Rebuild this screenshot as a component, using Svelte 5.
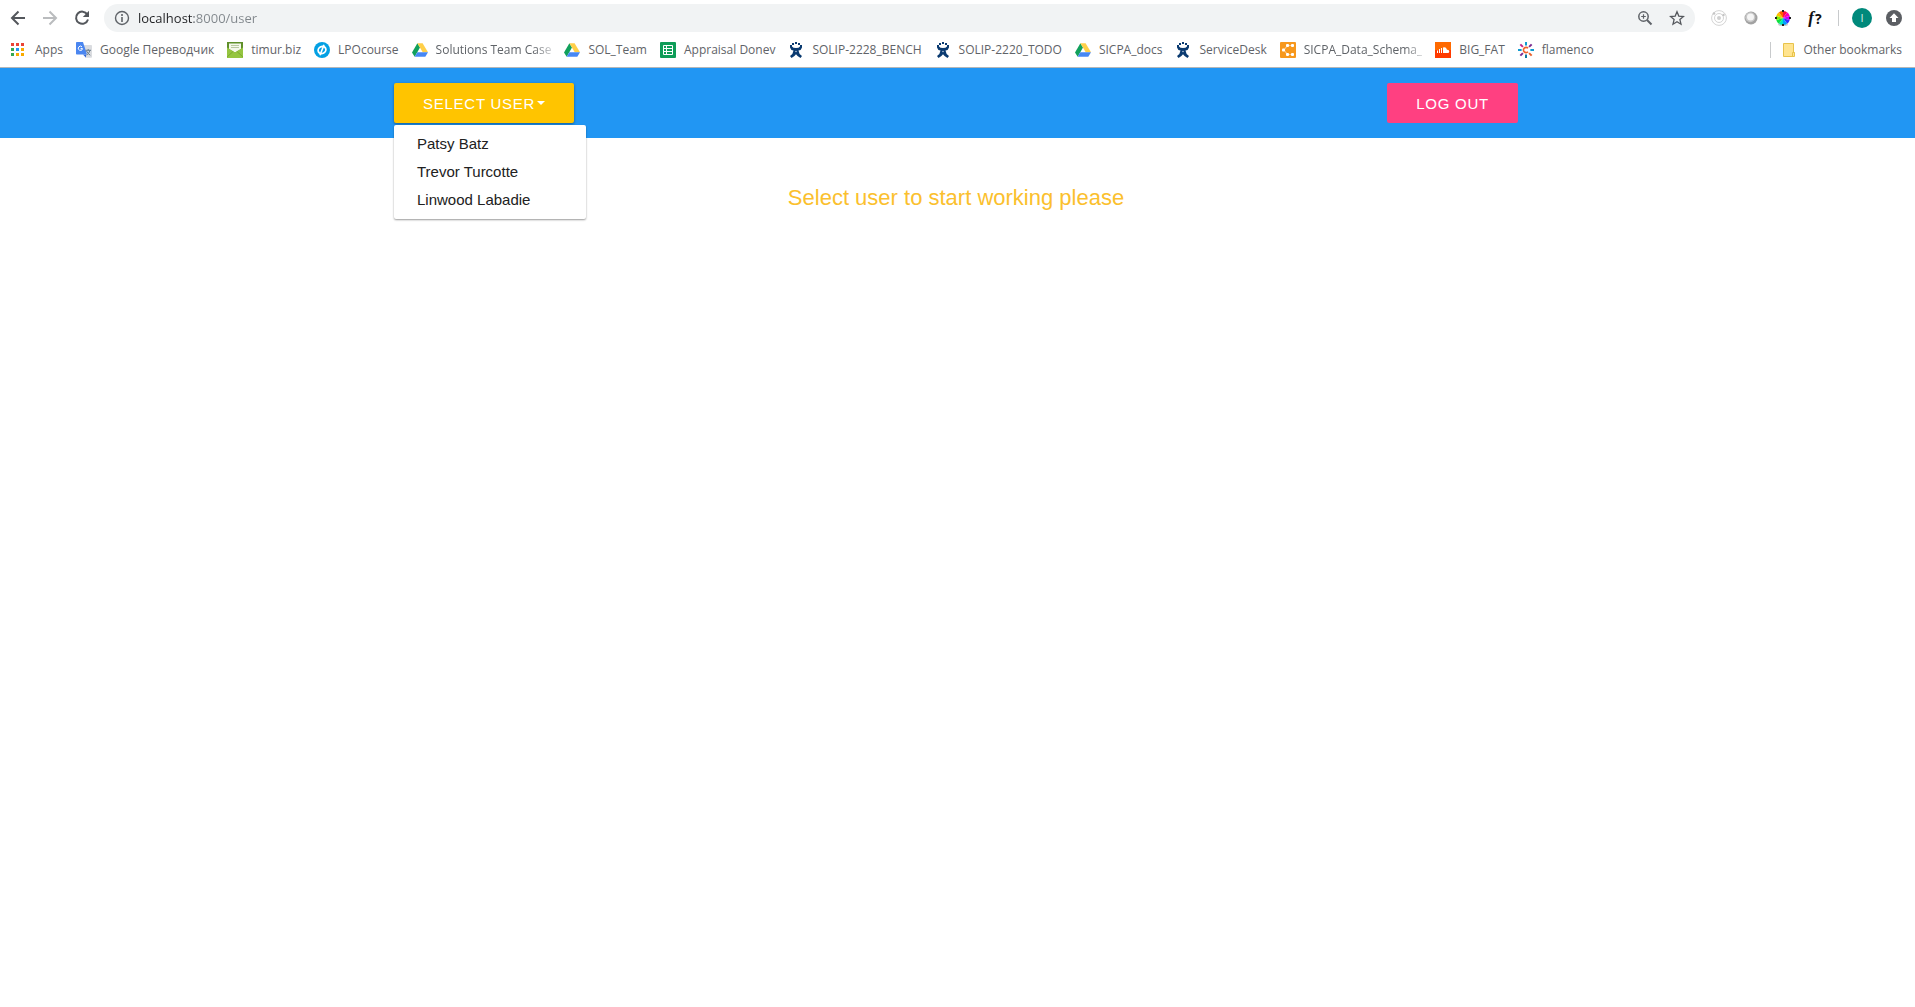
<script>
  let open = $state(true);
  let address = $state('localhost:8000/user');
  const users = ['Patsy Batz', 'Trevor Turcotte', 'Linwood Labadie'];
  const bookmarks = [
    { icon: 'apps', label: 'Apps' },
    { icon: 'translate', label: 'Google Переводчик' },
    { icon: 'mail', label: 'timur.biz' },
    { icon: 'lpo', label: 'LPOcourse' },
    { icon: 'drive', label: 'Solutions Team Case', long: true },
    { icon: 'drive', label: 'SOL_Team' },
    { icon: 'sheet', label: 'Appraisal Donev' },
    { icon: 'jira', label: 'SOLIP-2228_BENCH' },
    { icon: 'jira', label: 'SOLIP-2220_TODO' },
    { icon: 'drive', label: 'SICPA_docs' },
    { icon: 'jira', label: 'ServiceDesk' },
    { icon: 'schema', label: 'SICPA_Data_Schema_', long: true },
    { icon: 'cloud', label: 'BIG_FAT' },
    { icon: 'flamenco', label: 'flamenco' }
  ];
  const appColors = ['#ea4335', '#ea4335', '#ea4335', '#34a853', '#2196f3', '#f9ab00', '#34a853', '#f9ab00', '#f9ab00'];
  const wheel = ['#ff1040', '#ff00b0', '#c800ff', '#3030ff', '#00a0ff', '#00e8c0', '#10e040', '#80f000', '#ffc000', '#ff6000'];
  const rays = ['#0f9bd0', '#7b2a90', '#0f9bd0', '#e8622c', '#0f7ba0', '#7b2a90', '#0f9bd0', '#c0268a'];
  function wedge(i, n) {
    const a = (i / n) * 2 * Math.PI - Math.PI / 2;
    const b = ((i + 1) / n) * 2 * Math.PI - Math.PI / 2;
    return `M8 8L${8 + 7 * Math.cos(a)} ${8 + 7 * Math.sin(a)}A7 7 0 0 1 ${8 + 7 * Math.cos(b)} ${8 + 7 * Math.sin(b)}Z`;
  }
</script>

{#snippet favicon(name)}
  <svg class="favicon" viewBox="0 0 16 16" aria-hidden="true">
    {#if name === 'apps'}
      {#each appColors as c, i}
        <rect x={(i % 3) * 5} y={1 + Math.floor(i / 3) * 5} width="3" height="3" fill={c} />
      {/each}
    {:else if name === 'translate'}
      <path d="M6 3h9.200q.8 0 .8.8V15q0 .8-.8.8H10z" fill="#dadce0" />
      <path d="M10 15.800V12.500H7z" fill="#3367d6" />
      <path d="M.8 0H7l4 12.500H.8q-.8 0-.8-.8V.8Q0 0 .8 0z" fill="#4a86f0" />
      <path d="M6 4.900A2.100 2.100 0 1 0 6.500 6.600H4.600" fill="none" stroke="#fff" />
      <path d="M9.500 8.300h5.500M12.200 7v1.300M14 8.300q-.8 3-3.500 5M10.500 9q1 2.500 3.800 4.200" fill="none" stroke="#6b7f8e" />
    {:else if name === 'mail'}
      <path d="M0 0h16v16H0z" fill="#8bbd3c" />
      <path d="M0 0h16v6L8 11 0 6z" fill="#5f8f2a" />
      <path d="M2 1.500h12V7L8 10.500 2 7z" fill="#f4f7ea" />
      <path d="M4 3.500h8M4 5.500h8" stroke="#b9c9a0" />
      <path d="M0 5.500L8 10.500l8-5V16H0z" fill="#95c541" />
      <path d="M0 15L6 9.500M16 15l-6-5.500" stroke="#7cab31" />
    {:else if name === 'lpo'}
      <circle cx="8" cy="8" r="8" fill="#03a0e3" />
      <ellipse cx="8" cy="8" rx="4" ry="3.400" fill="none" stroke="#fff" stroke-width="1.800" transform="rotate(-30 8 8)" />
      <path d="M10 2.800L6 13.200" stroke="#fff" stroke-width="1.600" />
    {:else if name === 'drive'}
      <path d="M5.400 1.200L0 10.600l2.700 4.200L8 5.600z" fill="#11a05c" />
      <path d="M5.400 1.200h5.200L16 10.200h-5.300z" fill="#ffcf48" />
      <path d="M5.300 10.200H16l-2.700 4.600H2.700z" fill="#4687f4" />
    {:else if name === 'sheet'}
      <rect width="16" height="16" rx="1" fill="#0f9d58" />
      <path d="M3.500 3.500h9v9h-9zM3.500 6.500h9M3.500 9.500h9M6.500 3.500v9" fill="none" stroke="#fff" />
    {:else if name === 'jira'}
      <g fill="#0a3a70">
        <rect x="4" y="1" width="2" height="2" /><rect x="7" y="0" width="2" height="2" /><rect x="10" y="1" width="2" height="2" />
        <path d="M2 3h2v1.500q1 1.500 4 1.500t4-1.500V3h2v2.500Q13.500 8 10.500 8.500q.3 3.500 3.500 5.500l-1.500 2Q9.500 14.500 8 12.200 6.500 14.500 3.500 16L2 14q3.200-2 3.500-5.500Q2.500 8 2 5.500z" />
      </g>
      <circle cx="8" cy="9.500" r=".8" fill="#b9c8dc" />
    {:else if name === 'schema'}
      <rect width="16" height="16" rx="1" fill="#f7981d" />
      <path d="M12.500 3.500h-5L4 8l3.500 4.500h5" fill="none" stroke="#fbc583" stroke-width="1.200" />
      <g fill="#fff">
        <rect x="6" y="2" width="3" height="3" rx="1" /><rect x="11" y="2" width="3" height="3" rx="1" />
        <rect x="2" y="6.500" width="3" height="3" rx="1" />
        <rect x="6" y="11" width="3" height="3" rx="1" /><rect x="11" y="11" width="3" height="3" rx="1" />
      </g>
    {:else if name === 'cloud'}
      <rect width="16" height="8" fill="#ff6a00" /><rect y="8" width="16" height="8" fill="#ff3a00" />
      <path d="M2.500 8.500v2.500M4.500 7v4M6.500 6v5" stroke="#fff" />
      <path d="M8 5.600q3-1 4 2.200 2.300-.2 2.300 1.700 0 1.600-1.600 1.600H8z" fill="#fff" />
    {:else}
      {#each rays as c, i}
        <path d="M8 0v3.600" stroke={c} stroke-width="2" transform={`rotate(${i * 45} 8 8)`} />
      {/each}
      <path d="M10 6.300a2.600 2.600 0 1 0 0 3.400" fill="none" stroke="#f0642c" stroke-width="1.700" />
    {/if}
  </svg>
{/snippet}

<div class="browser">
  <div class="toolbar">
    <button class="tool" aria-label="Back">
      <svg class="glyph" viewBox="0 0 16 16"><path d="M15 8H2M8.500 1.500L2 8l6.500 6.500" fill="none" stroke="#54575c" stroke-width="2" /></svg>
    </button>
    <button class="tool" aria-label="Forward">
      <svg class="glyph" viewBox="0 0 16 16"><path d="M1 8h13M7.500 1.500L14 8l-6.500 6.500" fill="none" stroke="#babcbe" stroke-width="2" /></svg>
    </button>
    <button class="tool" aria-label="Reload">
      <svg class="glyph" viewBox="0 0 16 16"><path d="M13.300 4.400A6.100 6.100 0 1 0 14 9.500" fill="none" stroke="#54575c" stroke-width="2" /><path d="M15 .8V7H8.800z" fill="#54575c" /></svg>
    </button>
    <div class="omnibox">
      <svg class="info" viewBox="0 0 16 16" aria-hidden="true"><circle cx="8" cy="8" r="6.500" fill="none" stroke="#5f6368" stroke-width="1.400" /><path d="M8 7v5M8 4v2" stroke="#5f6368" stroke-width="1.600" /></svg>
      <input class="address" aria-label="Address" bind:value={address} />
      <button class="tool" aria-label="Zoom">
        <svg class="glyph" viewBox="0 0 16 16"><circle cx="6.500" cy="6.500" r="4.700" fill="none" stroke="#5f6368" stroke-width="1.500" /><path d="M10 10l4.500 4.500" stroke="#5f6368" stroke-width="2" /><path d="M4.200 6.500h4.600M6.500 4.200v4.600" stroke="#5f6368" stroke-width="1.200" /></svg>
      </button>
      <button class="tool" aria-label="Bookmark this page">
        <svg class="glyph" viewBox="0 0 16 16"><path d="M8 1.800l1.800 4.300 4.700.4-3.600 3.100 1.100 4.600L8 11.800l-4 2.400 1.100-4.600L1.500 6.500l4.700-.4z" fill="none" stroke="#54575c" stroke-width="1.300" /></svg>
      </button>
    </div>
    <button class="tool" aria-label="Orbit extension">
      <svg class="glyph" viewBox="0 0 16 16"><g fill="none" stroke="#d4d4d4"><circle cx="8" cy="8" r="7.400" /><circle cx="8" cy="8" r="4.500" /></g><circle cx="8" cy="8" r="2" fill="#cfcfcf" /><circle cx="3" cy="3.500" r="1.300" fill="#c4c4c4" /><circle cx="12.500" cy="5" r="1.200" fill="#c4c4c4" /></svg>
    </button>
    <button class="tool" aria-label="Sphere extension">
      <svg class="glyph" viewBox="0 0 16 16"><circle cx="8" cy="8" r="6.500" fill="#a2a2a2" /><circle cx="7.300" cy="7.300" r="5" fill="#c8c8c8" /><circle cx="7.500" cy="7" r="3.500" fill="#f5f5f5" /></svg>
    </button>
    <button class="tool" aria-label="Color picker extension">
      <svg class="glyph" viewBox="0 0 16 16">
        <ellipse cx="8" cy="14.500" rx="5" ry="1.500" fill="#ccc" />
        {#each wheel as color, i}<path d={wedge(i, wheel.length)} fill={color} />{/each}
        <path d="M8 0v2M8 14v2M0 8h2M14 8h2" stroke="#222" stroke-width="2" />
      </svg>
    </button>
    <button class="tool font-tool" aria-label="Font finder"><i>f</i><span>?</span></button>
    <span class="divider"></span>
    <button class="tool" aria-label="Profile"><span class="avatar">I</span></button>
    <button class="tool" aria-label="Update available">
      <svg class="glyph" viewBox="0 0 16 16"><circle cx="8" cy="8" r="8" fill="#5b5e63" /><path d="M8 3.200L12.500 8H10v4H6V8H3.500z" fill="#fff" /></svg>
    </button>
  </div>
  <nav class="bookmarks" aria-label="Bookmarks">
    {#each bookmarks as b}
      <a href="#bookmark" class="bookmark">
        {@render favicon(b.icon)}
        <span class:long={b.long}>{b.label}</span>
      </a>
    {/each}
    <a href="#other" class="other">
      <svg class="folder" viewBox="0 0 12 14" aria-hidden="true"><path d="M.5.5h10v9h1v4H.5z" fill="#ffe48f" stroke="#e8c34b" /><path d="M9.500 13V9.500h2" fill="none" stroke="#e8c34b" /></svg>
      <span>Other bookmarks</span>
    </a>
  </nav>
</div>

<header class="appbar">
  <div class="container">
    <div class="dropdown">
      <button class="btn accent" aria-expanded={open} onclick={() => (open = !open)}>Select user<span class="caret"></span></button>
      {#if open}
        <ul class="menu">
          {#each users as user}
            <li><a href="#user">{user}</a></li>
          {/each}
        </ul>
      {/if}
    </div>
    <button class="btn danger">Log out</button>
  </div>
</header>
<main class="container">
  <p class="prompt">Select user to start working please</p>
</main>

<style>
  :global(body) {
    margin: 0;
    background: #fff;
    font-family: 'Liberation Sans', Arial, sans-serif;
  }
  button {
    border: 0;
    padding: 0;
    background: none;
    font: inherit;
    cursor: pointer;
  }
  a {
    color: inherit;
    text-decoration: none;
  }
  .browser {
    font-family: 'Open Sans', 'Noto Sans', sans-serif;
    border-bottom: 1px solid #b4b6b8;
  }
  .toolbar {
    display: flex;
    align-items: center;
    padding: 4px 5px 2px 2px;
  }
  .tool {
    display: flex;
    flex: none;
    align-items: center;
    justify-content: center;
    width: 32px;
    height: 28px;
  }
  .glyph,
  .favicon,
  .info {
    display: block;
    flex: none;
    width: 16px;
    height: 16px;
  }
  .omnibox {
    display: flex;
    flex: 1;
    align-items: center;
    height: 28px;
    margin: 0 8px 0 6px;
    padding: 0 2px 0 10px;
    border-radius: 14px;
    background: #f1f3f4;
  }
  .address {
    flex: 1;
    min-width: 0;
    height: 24px;
    margin-left: 8px;
    padding: 0;
    border: 0;
    outline: 0;
    font: 13px 'Open Sans', sans-serif;
    color: transparent;
    background: linear-gradient(to right, #202124 56px, #80868b 56px);
    background-clip: text;
  }
  .font-tool {
    gap: 1px;
    color: #111;
    font: bold 17px 'Liberation Serif', serif;
  }
  .font-tool span {
    font: bold 14px 'Open Sans', sans-serif;
  }
  .divider {
    width: 1px;
    height: 16px;
    margin: 0 7px;
    background: #c8cacc;
  }
  .avatar {
    width: 20px;
    height: 20px;
    border-radius: 50%;
    background: #00897b;
    color: #d5ece9;
    font-size: 11px;
    line-height: 20px;
  }
  .bookmarks {
    display: flex;
    align-items: center;
    gap: 13px;
    height: 32px;
    padding: 0 13px 1px 11px;
    color: #5f6368;
    font-size: 12px;
    line-height: 16px;
    white-space: nowrap;
  }
  .bookmark {
    display: flex;
    flex: none;
    gap: 8px;
  }
  .long {
    mask-image: linear-gradient(to right, #000 85%, rgba(0, 0, 0, 0.3));
  }
  .other {
    display: flex;
    align-items: center;
    gap: 8px;
    margin-left: auto;
    padding-left: 12px;
    border-left: 1px solid #c8cacc;
  }
  .folder {
    width: 12px;
    height: 14px;
  }
  .container {
    box-sizing: border-box;
    max-width: 1127px;
    margin: 0 auto;
    padding-right: 3px;
  }
  .appbar {
    padding: 15px 0;
    background: #2196f3;
  }
  .appbar .container {
    display: flex;
    justify-content: space-between;
  }
  .dropdown {
    position: relative;
  }
  .btn {
    display: flex;
    align-items: center;
    height: 40px;
    padding: 0 29px;
    border-radius: 2px;
    color: #fff;
    font-size: 15px;
    letter-spacing: 0.05em;
    text-transform: uppercase;
  }
  .accent {
    background: #ffc400;
    box-shadow: 0 1px 3px rgba(0, 0, 0, 0.4);
  }
  .danger {
    background: #ff4081;
  }
  .caret {
    margin-left: 2px;
    border: 4px solid transparent;
    border-top-color: #fff;
    border-bottom: 0;
  }
  .menu {
    position: absolute;
    top: 42px;
    left: 0;
    box-sizing: border-box;
    width: 192px;
    margin: 0;
    padding: 5px 0;
    border-radius: 2px;
    background: #fff;
    box-shadow: 0 1px 2px rgba(0, 0, 0, 0.4);
    color: #212121;
    font-size: 15px;
    line-height: 28px;
    list-style: none;
  }
  .menu a {
    display: block;
    padding: 0 23px;
  }
  .prompt {
    margin: 45px 0;
    color: #fbc02d;
    font-size: 22px;
    line-height: 30px;
    text-align: center;
  }
</style>
